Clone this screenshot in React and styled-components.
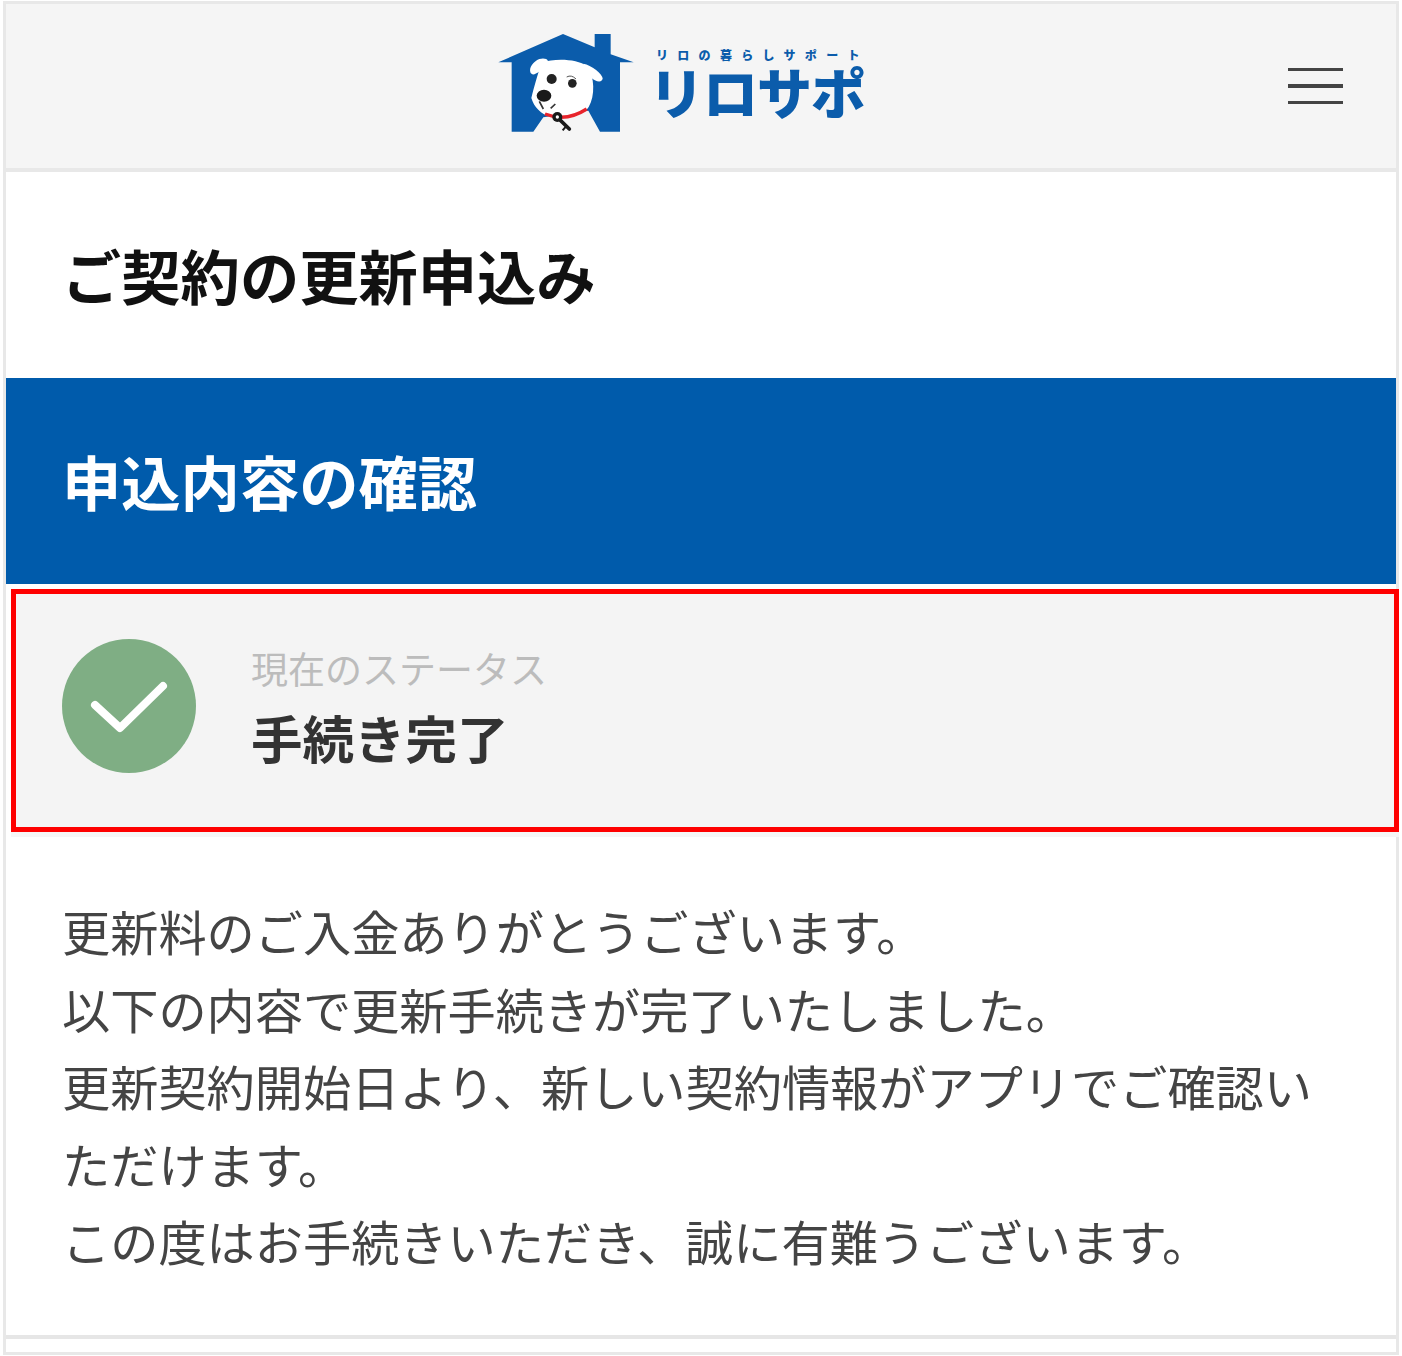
import React from 'react';
import styled, { createGlobalStyle } from 'styled-components';

const GlobalStyle = createGlobalStyle`
  html, body {
    margin: 0;
    padding: 0;
    background: #ffffff;
  }
  body {
    font-family: "Noto Sans CJK JP", "Noto Sans", sans-serif;
  }
`;

const Frame = styled.div`
  box-sizing: border-box;
  width: 1396px;
  height: 1354px;
  margin: 1px 0 0 3px;
  border: 3px solid #e8e8e8;
  background: #ffffff;
  display: flex;
  flex-direction: column;
`;

const Header = styled.header`
  box-sizing: border-box;
  height: 168px;
  flex: none;
  background: #f5f5f5;
  border-bottom: 4px solid #e8e8e8;
  display: flex;
  align-items: center;
  justify-content: space-between;
  padding: 0 53px 0 492px;
`;

const Logo = styled.div`
  display: flex;
  align-items: center;
  gap: 15px;
  margin-top: -7px;
`;

const LogoWords = styled.div`
  display: flex;
  flex-direction: column;
  color: #0b5cab;
  font-weight: 900;
`;

const LogoTagline = styled.span`
  font-size: 12px;
  line-height: 14px;
  letter-spacing: 9.3px;
  margin-left: 7px;
  white-space: nowrap;
`;

const LogoName = styled.span`
  font-size: 55px;
  line-height: 56px;
  letter-spacing: -1px;
  white-space: nowrap;
`;

const Burger = styled.div`
  width: 55px;
  display: flex;
  flex-direction: column;
  gap: 13px;
`;

const BurgerLine = styled.span`
  display: block;
  height: 3.5px;
  background: #444444;
`;

const TitleRow = styled.div`
  box-sizing: border-box;
  height: 206px;
  flex: none;
  display: flex;
  align-items: center;
  padding: 0 0 0 56px;
`;

const PageTitle = styled.h1`
  margin: 0;
  font-size: 59.3px;
  line-height: 1.2;
  font-weight: 700;
  color: #111111;
`;

const Band = styled.div`
  box-sizing: border-box;
  height: 206px;
  flex: none;
  background: #005bab;
  display: flex;
  align-items: center;
  padding: 0 0 0 56px;
`;

const BandTitle = styled.h2`
  margin: 0;
  font-size: 59.3px;
  line-height: 1.2;
  font-weight: 700;
  color: #ffffff;
`;

const StatusBox = styled.section`
  box-sizing: border-box;
  height: 243px;
  flex: none;
  margin: 5px -3px 0 5px;
  border: 5px solid #fe0000;
  background: #f4f4f4;
  box-shadow: 0 5px 0 #f6f6f6;
  display: flex;
  align-items: center;
  gap: 55px;
  padding: 0 0 9px 46px;
`;

const StatusIcon = styled.div`
  width: 134px;
  height: 134px;
  flex: none;
  border-radius: 50%;
  background: #7fae84;
  display: flex;
  align-items: center;
  justify-content: center;
`;

const StatusText = styled.div`
  display: flex;
  flex-direction: column;
  gap: 10px;
  margin-top: 2px;
`;

const StatusLabel = styled.span`
  font-size: 37px;
  line-height: 50px;
  color: #bcbcbc;
`;

const StatusValue = styled.span`
  font-size: 51.5px;
  line-height: 68px;
  font-weight: 700;
  color: #333333;
`;

const Message = styled.div`
  flex: 1;
  padding: 60px 50px 0 56px;
`;

const Line = styled.p`
  margin: 0;
  font-size: 48.2px;
  line-height: 77.5px;
  color: #444444;
`;

const BottomRule = styled.div`
  height: 4px;
  flex: none;
  margin-bottom: 13px;
  background: #e6e6e6;
`;

const HouseLogo = () => (
  <svg width="136" height="100" viewBox="0 0 408 300">
    {/* house */}
    <path
      d="M1 88 L195 3 L290 43 L290 3 L338 3 L338 64 L407 88 L366 88 L366 296 L306 296 L271 233 L136 253 L106 296 L41 296 L41 88 Z"
      fill="#0b5cab"
    />
    {/* dog head */}
    <path
      d="M132 88 C170 76 235 76 268 100 C290 130 292 190 272 222 C255 250 205 264 160 252 C128 244 108 222 100 195 C108 165 118 125 132 88 Z"
      fill="#ffffff"
    />
    <path d="M124 78 C146 72 160 84 142 100 C126 116 104 134 97 118 C93 102 106 86 124 78 Z" fill="#ffffff" />
    <path d="M256 92 C280 96 312 122 314 136 C314 150 292 148 278 132 C268 120 258 104 256 92 Z" fill="#ffffff" />
    {/* eyes */}
    <circle cx="161" cy="138" r="15" fill="#222222" />
    <circle cx="223" cy="151" r="13" fill="#222222" />
    <path d="M206 132 Q220 124 234 138" stroke="#555555" strokeWidth="3" fill="none" />
    {/* nose */}
    <ellipse cx="138" cy="188" rx="22" ry="18" fill="#1a1a1a" />
    <path d="M124 205 L136 228 M158 226 L172 213" stroke="#333333" strokeWidth="5" fill="none" />
    {/* collar */}
    <path d="M141 243 Q205 268 266 228" stroke="#e8242c" strokeWidth="10" fill="none" />
    {/* key */}
    <path d="M178 253 L214 288" stroke="#1a1a1a" strokeWidth="11" strokeLinecap="round" />
    <path d="M204 280 L194 292" stroke="#1a1a1a" strokeWidth="6" />
    <circle cx="178" cy="252" r="15" fill="#1a1a1a" />
    <circle cx="178" cy="252" r="5" fill="#ffffff" />
  </svg>
);

const CheckMark = () => (
  <svg width="134" height="134" viewBox="0 0 134 134">
    <path
      d="M33 66 L58 89 L101 47"
      fill="none"
      stroke="#ffffff"
      strokeWidth="8"
      strokeLinecap="round"
      strokeLinejoin="round"
    />
  </svg>
);

const lines = [
  '更新料のご入金ありがとうございます。',
  '以下の内容で更新手続きが完了いたしました。',
  '更新契約開始日より、新しい契約情報がアプリでご確認い',
  'ただけます。',
  'この度はお手続きいただき、誠に有難うございます。',
];

const App = () => (
  <>
    <GlobalStyle />
    <Frame>
      <Header>
        <Logo>
          <HouseLogo />
          <LogoWords>
            <LogoTagline>リロの暮らしサポート</LogoTagline>
            <LogoName>リロサポ</LogoName>
          </LogoWords>
        </Logo>
        <Burger>
          <BurgerLine />
          <BurgerLine />
          <BurgerLine />
        </Burger>
      </Header>
      <TitleRow>
        <PageTitle>ご契約の更新申込み</PageTitle>
      </TitleRow>
      <Band>
        <BandTitle>申込内容の確認</BandTitle>
      </Band>
      <StatusBox>
        <StatusIcon>
          <CheckMark />
        </StatusIcon>
        <StatusText>
          <StatusLabel>現在のステータス</StatusLabel>
          <StatusValue>手続き完了</StatusValue>
        </StatusText>
      </StatusBox>
      <Message>
        {lines.map((line) => (
          <Line key={line}>{line}</Line>
        ))}
      </Message>
      <BottomRule />
    </Frame>
  </>
);

export default App;
